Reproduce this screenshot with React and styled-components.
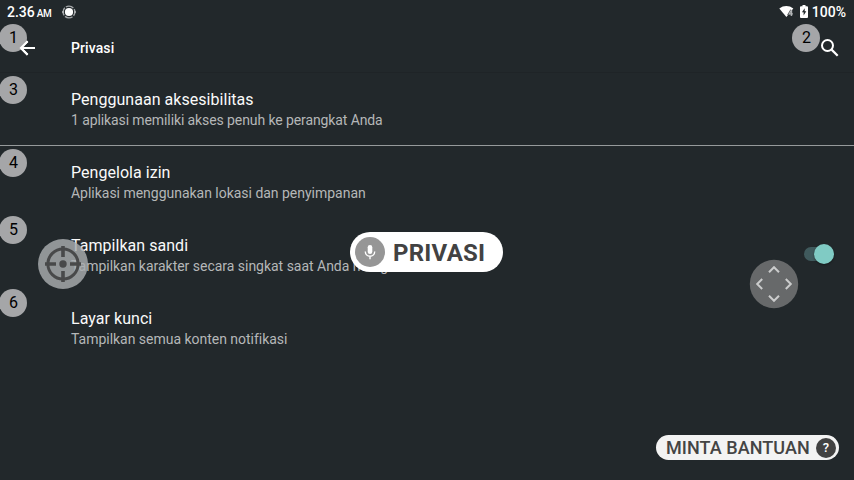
import React from "react";
import styled, { createGlobalStyle } from "styled-components";

const GlobalStyle = createGlobalStyle`
  * { box-sizing: border-box; }
  body { margin: 0; background: #22282b; overflow: hidden; }
`;

const Screen = styled.div`
  position: relative;
  display: flex;
  flex-direction: column;
  width: 854px;
  height: 480px;
  overflow: hidden;
  background: #22282b;
  color: #fff;
  font-family: Roboto, sans-serif;
  white-space: nowrap;
`;

const StatusBar = styled.header`
  display: flex;
  align-items: center;
  justify-content: space-between;
  height: 24px;
  padding: 0 8px 1px 7px;
  font-size: 14px;
  font-weight: 500;
`;

const StatusGroup = styled.div`
  display: flex;
  align-items: center;
`;

const Clock = styled.span`
  margin-right: 9px;
  small { font-size: 10px; margin-left: 2px; letter-spacing: -0.3px; }
`;

const Percent = styled.span`
  margin-left: 4px;
`;

const Toolbar = styled.div`
  display: flex;
  align-items: center;
  height: 49px;
  padding: 0 15px 0 18px;
  border-bottom: 1px solid #1f2427;
`;

const Heading = styled.h1`
  flex: 1;
  margin: 0 0 0 35px;
  font-size: 14px;
  line-height: 20px;
  font-weight: 500;
  letter-spacing: 0.1px;
`;

const List = styled.main`
  flex: 1;
`;

const Row = styled.div`
  display: flex;
  align-items: center;
  justify-content: space-between;
  height: 73px;
  padding: ${(p) => (p.$divided ? "1px 20px 0 71px" : "0 20px 1px 71px")};
  border-bottom: ${(p) => (p.$divided ? "1px solid #969a9b" : "none")};
`;

const RowTitle = styled.div`
  font-size: 16px;
  line-height: 21px;
  letter-spacing: 0.04px;
  color: #fafafa;
`;

const RowSummary = styled.div`
  font-size: 14px;
  line-height: 20px;
  letter-spacing: ${(p) => (p.$tight ? "-0.1px" : "-0.02px")};
  color: #b5b7b8;
`;

const Switch = styled.div`
  display: flex;
  align-items: center;
  justify-content: flex-end;
  width: 30px;
  height: 14px;
  margin-bottom: 2px;
  border-radius: 7px;
  background: #405a5d;
`;

const Thumb = styled.div`
  width: 20px;
  height: 20px;
  flex: none;
  border-radius: 50%;
  background: #80cbc4;
  box-shadow: 0 1px 2px #0006;
`;

const Badge = styled.div`
  position: absolute;
  left: ${(p) => p.$x}px;
  top: ${(p) => p.$y}px;
  width: 28px;
  height: 28px;
  padding-left: 1px;
  border-radius: 50%;
  background: #a5a6a8;
  color: #000;
  font-size: 16px;
  line-height: 27px;
  text-align: center;
`;

const Floating = styled.div`
  position: absolute;
  left: ${(p) => p.$x}px;
  top: ${(p) => p.$y}px;
  svg { display: block; }
`;

const VoicePill = styled.div`
  position: absolute;
  left: 350px;
  top: 232px;
  display: flex;
  align-items: center;
  width: 153px;
  height: 40px;
  padding-left: 5px;
  border-radius: 20px;
  background: #fff;
  color: #424242;
  font-size: 24px;
  font-weight: 700;
  letter-spacing: 0.25px;
`;

const VoiceLabel = styled.span`
  padding-top: 2px;
`;

const MicDisc = styled.div`
  display: flex;
  align-items: center;
  justify-content: center;
  width: 30px;
  height: 30px;
  margin-right: 8px;
  border-radius: 50%;
  background: #969696;
`;

const HelpPill = styled.div`
  position: absolute;
  left: 656px;
  top: 435px;
  display: flex;
  align-items: center;
  justify-content: space-between;
  width: 183px;
  height: 25px;
  padding: 0 3px 0 10px;
  border-radius: 13px;
  background: #f3f3f3;
  color: #444;
  font-size: 18px;
  font-weight: 500;
  letter-spacing: 0.06px;
`;

const HelpDisc = styled.span`
  width: 20px;
  height: 20px;
  border-radius: 50%;
  background: #424242;
  color: #fff;
  font-size: 13px;
  line-height: 20px;
  text-align: center;
`;

const RecordIcon = () => (
  <svg width="16" height="14" viewBox="0 0 16 14">
    <circle cx="8" cy="7" r="5.9" fill="none" stroke="#a3a6a8" strokeWidth="1.4" strokeDasharray="8 1.27" strokeDashoffset="4" />
    <path d="M1 7h2M13 7h2" stroke="#b4b6b8" strokeWidth="1.5" />
    <circle cx="8" cy="7" r="4.1" fill="#fff" />
  </svg>
);

const WifiIcon = () => (
  <svg width="16" height="14" viewBox="0 0 16 14">
    <path d="M.3 3.5C4.5.2 10.1.2 14.3 3.5L7.4 12Z" fill="#fff" />
    <path d="M12.4 5L10.2 8.9h3.6M12.4 5v6" fill="none" stroke="#4b5053" strokeWidth="2.4" />
    <path d="M12.4 5L10.2 8.9h3.6M12.4 5v6" fill="none" stroke="#b4b7b9" strokeWidth="1.1" />
  </svg>
);

const BatteryIcon = () => (
  <svg width="8" height="14" viewBox="0 0 8 14">
    <path d="M2.5 0h3v1.3H7q1 0 1 1V12q0 1-1 1H1q-1 0-1-1V2.3q0-1 1-1h1.5z" fill="#fff" />
    <path d="M4.7 3.3L1.9 7.3h1.7v3.1l2.7-4.2H4.7z" fill="#22282b" />
  </svg>
);

const Spacer = styled.span`
  width: 5px;
`;

const BackIcon = () => (
  <svg width="18" height="16" viewBox="0 0 18 16">
    <path d="M17 8H3.2M9.6 1.3L2.9 8l6.7 6.7" fill="none" stroke="#fff" strokeWidth="2" />
  </svg>
);

const SearchIcon = () => (
  <svg width="18" height="18" viewBox="0 0 18 18">
    <circle cx="6.5" cy="6.5" r="5.5" fill="none" stroke="#fff" strokeWidth="2" />
    <path d="M10.6 10.6l6.1 6.1" stroke="#fff" strokeWidth="2.2" />
  </svg>
);

const MicIcon = () => (
  <svg width="12" height="16" viewBox="0 0 12 16">
    <rect x="3.7" y="1" width="4.6" height="9" rx="2.3" fill="#fff" />
    <path d="M1.3 7.5C1.3 13.8 10.7 13.8 10.7 7.5M6 12v3.3" fill="none" stroke="#fff" strokeWidth="1.4" />
  </svg>
);

const TargetIcon = () => (
  <svg width="50" height="50" viewBox="0 0 50 50">
    <circle cx="25" cy="25" r="25" fill="#a9adb0" fillOpacity=".82" />
    <g fill="none" stroke="#48494a">
      <circle cx="25" cy="25" r="15.1" strokeWidth="3" />
      <path d="M25 7v11M25 32v11M7 25h11M32 25h11" strokeWidth="3.6" />
    </g>
    <circle cx="25" cy="25" r="3.7" fill="#48494a" />
  </svg>
);

const DpadIcon = () => (
  <svg width="50" height="50" viewBox="0 0 50 50">
    <circle cx="25" cy="25" r="24.2" fill="#67696a" />
    <path d="M20 13.2l5-5 5 5M20 36.8l5 5 5-5M13.2 20l-5 5 5 5M36.8 20l5 5-5 5" fill="none" stroke="#cbcccc" strokeWidth="2" />
  </svg>
);

const rows = [
  { title: "Penggunaan aksesibilitas", summary: "1 aplikasi memiliki akses penuh ke perangkat Anda", divided: true },
  { title: "Pengelola izin", summary: "Aplikasi menggunakan lokasi dan penyimpanan" },
  { title: "Tampilkan sandi", summary: "Tampilkan karakter secara singkat saat Anda mengetik", toggle: true },
  { title: "Layar kunci", summary: "Tampilkan semua konten notifikasi" },
];

const badges = [
  [-1, 24],
  [792, 24],
  [-1, 76],
  [-1, 149],
  [-1, 216],
  [-1, 289],
];

export default function App() {
  return (
    <Screen>
      <GlobalStyle />
      <StatusBar>
        <StatusGroup>
          <Clock>2.36<small>AM</small></Clock>
          <RecordIcon />
        </StatusGroup>
        <StatusGroup>
          <WifiIcon />
          <Spacer />
          <BatteryIcon />
          <Percent>100%</Percent>
        </StatusGroup>
      </StatusBar>
      <Toolbar>
        <BackIcon />
        <Heading>Privasi</Heading>
        <SearchIcon />
      </Toolbar>
      <List>
        {rows.map((row) => (
          <Row key={row.title} $divided={row.divided}>
            <div>
              <RowTitle>{row.title}</RowTitle>
              <RowSummary $tight={row.divided}>{row.summary}</RowSummary>
            </div>
            {row.toggle && <Switch><Thumb /></Switch>}
          </Row>
        ))}
      </List>
      {badges.map(([x, y], i) => (
        <Badge key={i} $x={x} $y={y}>{i + 1}</Badge>
      ))}
      <Floating $x={18} $y={40}><BackIcon /></Floating>
      <Floating $x={38} $y={239}><TargetIcon /></Floating>
      <Floating $x={749} $y={259}><DpadIcon /></Floating>
      <VoicePill><MicDisc><MicIcon /></MicDisc><VoiceLabel>PRIVASI</VoiceLabel></VoicePill>
      <HelpPill>MINTA BANTUAN<HelpDisc>?</HelpDisc></HelpPill>
    </Screen>
  );
}
